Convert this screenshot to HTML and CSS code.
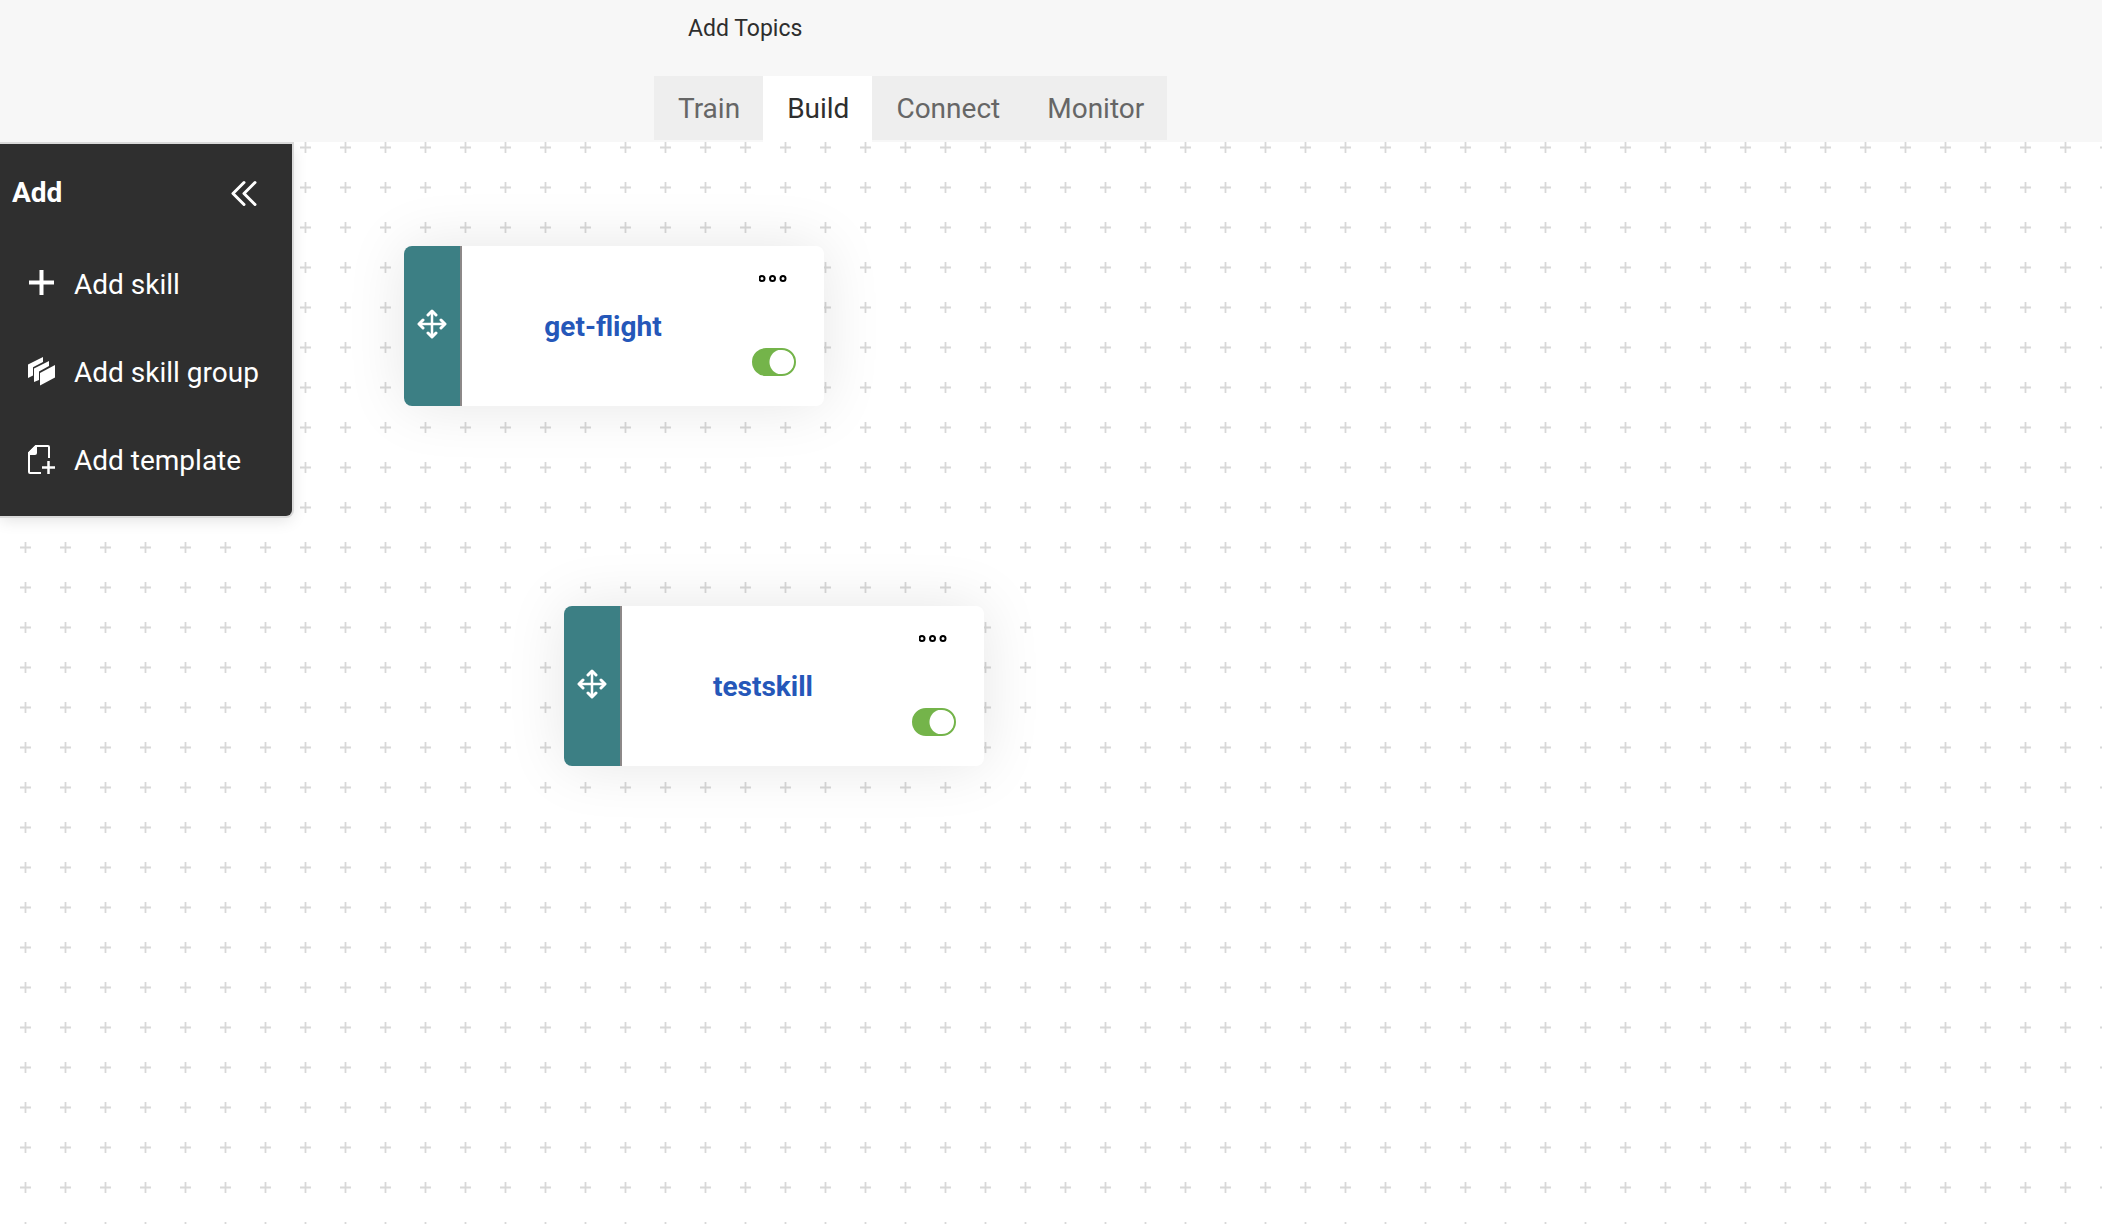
FILE: index.html
```html
<!DOCTYPE html>
<html lang="en">
<head>
<meta charset="utf-8">
<title>Skill builder</title>
<link rel="stylesheet" href="styles.css">
</head>
<body>
<header class="header">
  <p class="topics">Add Topics</p>
  <nav class="tabs">
    <a class="tab" href="#train">Train</a>
    <a class="tab tab-active" href="#build" aria-current="page">Build</a>
    <a class="tab" href="#connect">Connect</a>
    <a class="tab" href="#monitor">Monitor</a>
  </nav>
</header>
<main class="canvas">
  <aside class="panel">
    <div class="panel-head">
      <h2 class="panel-title">Add</h2>
      <button class="collapse" type="button" aria-label="Collapse">
        <svg width="26" height="26" viewBox="0 0 26 26" fill="none" stroke="currentColor" stroke-width="3" stroke-linecap="round" stroke-linejoin="round"><path d="M13 2.500 2 13.500l11 11M24 2.500 13 13.500l11 11"/></svg>
      </button>
    </div>
    <button class="action" type="button">
      <svg class="icon" viewBox="0 0 28 30" fill="none" stroke="currentColor" stroke-width="4"><path d="M1 13.500h25M13.500 1v25"/></svg>
      Add skill
    </button>
    <button class="action" type="button">
      <svg class="icon" viewBox="0 0 28 30" fill="currentColor"><path d="M0 7.500 15 0v5L5 10.200v8.300l-5 2.500ZM6 11.500 21 4v5L11 14.500V23l-5 2ZM12 16 27 8v12.500L12 28.500Z"/></svg>
      Add skill group
    </button>
    <button class="action" type="button">
      <svg class="icon" viewBox="0 0 28 30" fill="none" stroke="currentColor" stroke-width="2" stroke-linejoin="round"><path d="M13 28H2q-1 0-1-1V8l7-7h12q1 0 1 1v11"/><path d="M20.500 16v13M14 22.500h13" stroke-width="2.500"/><path d="M1 8l7-7v7q0 1-1 1H1Z" fill="currentColor"/></svg>
      Add template
    </button>
  </aside>

  <article class="node node-flight">
    <button class="handle" type="button" aria-label="Move get-flight">
      <svg width="30" height="30" viewBox="0 0 30 30" fill="none" stroke="currentColor" stroke-width="3" stroke-linecap="round" stroke-linejoin="round"><path d="M15 3v24M3 15h24" stroke-width="2.500"/><path d="M11 6l4-4 4 4M11 24l4 4 4-4M6 11l-4 4 4 4M24 11l4 4-4 4"/></svg>
    </button>
    <a class="name" href="#get-flight">get-flight</a>
    <div class="controls">
      <button class="more" type="button" aria-label="More actions">
        <svg width="30" height="8" viewBox="0 0 30 8" fill="none" stroke="currentColor" stroke-width="2"><circle cx="3" cy="4.500" r="2.500"/><circle cx="13.500" cy="4.500" r="2.500"/><circle cx="24" cy="4.500" r="2.500"/></svg>
      </button>
      <input class="switch" type="checkbox" role="switch" aria-label="Enable get-flight" checked>
    </div>
  </article>

  <article class="node node-test">
    <button class="handle" type="button" aria-label="Move testskill">
      <svg width="30" height="30" viewBox="0 0 30 30" fill="none" stroke="currentColor" stroke-width="3" stroke-linecap="round" stroke-linejoin="round"><path d="M15 3v24M3 15h24" stroke-width="2.500"/><path d="M11 6l4-4 4 4M11 24l4 4 4-4M6 11l-4 4 4 4M24 11l4 4-4 4"/></svg>
    </button>
    <a class="name" href="#testskill">testskill</a>
    <div class="controls">
      <button class="more" type="button" aria-label="More actions">
        <svg width="30" height="8" viewBox="0 0 30 8" fill="none" stroke="currentColor" stroke-width="2"><circle cx="3" cy="4.500" r="2.500"/><circle cx="13.500" cy="4.500" r="2.500"/><circle cx="24" cy="4.500" r="2.500"/></svg>
      </button>
      <input class="switch" type="checkbox" role="switch" aria-label="Enable testskill" checked>
    </div>
  </article>
</main>
</body>
</html>
```
FILE: styles.css
```css
* { box-sizing: border-box; }
body {
  margin: 0;
  min-height: 100vh;
  display: flex;
  flex-direction: column;
  background: #fff;
  color: #2e2e2e;
  font: 28px/32px Roboto, sans-serif;
}
button {
  border: 0;
  padding: 0;
  background: none;
  color: inherit;
  font: inherit;
  cursor: pointer;
}
svg { display: block; }

.header {
  padding: 13px 24px 2px 654px;
  background: #f7f7f7;
}
.topics {
  margin: 0 0 31px 34px;
  font-size: 23px;
}
.tabs { display: flex; }
.tab {
  padding: 17px 23px 15px 24px;
  background: #eee;
  color: #666;
  text-decoration: none;
}
.tab-active {
  background: #fff;
  color: #2e2e2e;
  margin-bottom: -2px;
}

.canvas {
  flex: 1;
  position: relative;
  overflow: hidden;
  background: #fff url("data:image/svg+xml,%3Csvg xmlns='http://www.w3.org/2000/svg' width='40' height='40'%3E%3Cpath d='M20 20.500h11M25.500 15v11' stroke='%23d8d8d8' stroke-width='1.800'/%3E%3C/svg%3E") 0 -15px;
}

.panel {
  position: absolute;
  top: 2px;
  left: 0;
  width: 292px;
  padding: 32px 32px 11px 12px;
  border-radius: 0 0 6px 0;
  background: #2f2f2f;
  color: #fff;
  box-shadow: 0 0 0 2px #dadada, 0 4px 16px rgba(0, 0, 0, .12);
}
.panel-head {
  display: flex;
  align-items: center;
  justify-content: space-between;
  margin-bottom: 31px;
}
.panel-title {
  margin: 0;
  font-size: 28px;
  font-weight: 700;
}
.collapse { padding: 4px 3px; }
.action {
  display: flex;
  align-items: center;
  gap: 18px;
  height: 88px;
  padding-left: 16px;
  white-space: nowrap;
}
.icon {
  width: 28px;
  height: 30px;
  margin-bottom: 2px;
}

.node {
  position: absolute;
  display: grid;
  grid-template-columns: 58px 1fr 96px;
  width: 420px;
  height: 160px;
  border-radius: 8px;
  background: #fff;
  box-shadow: 0 0 60px rgba(0, 0, 0, .1);
}
.node-flight { left: 404px; top: 104px; }
.node-test { left: 564px; top: 464px; }
.handle {
  display: grid;
  place-items: center;
  padding-bottom: 4px;
  border-right: 2px solid #8c8888;
  border-radius: 8px 0 0 8px;
  background: #3c7f84;
  color: #fff;
  cursor: move;
}
.name {
  align-self: center;
  justify-self: center;
  padding: 2px 0 0 16px;
  color: #2557b9;
  font-weight: 700;
  text-decoration: none;
}
.controls {
  display: flex;
  flex-direction: column;
  align-items: center;
  justify-content: space-between;
  padding: 28px 5px 30px 0;
}
.more { color: #000; }
.switch {
  appearance: none;
  width: 44px;
  height: 28px;
  margin: 0;
  border: 2px solid #74b44a;
  border-radius: 14px;
  background: radial-gradient(circle at 28px 12px, #fff 12px, #74b44a 13px);
}
```
